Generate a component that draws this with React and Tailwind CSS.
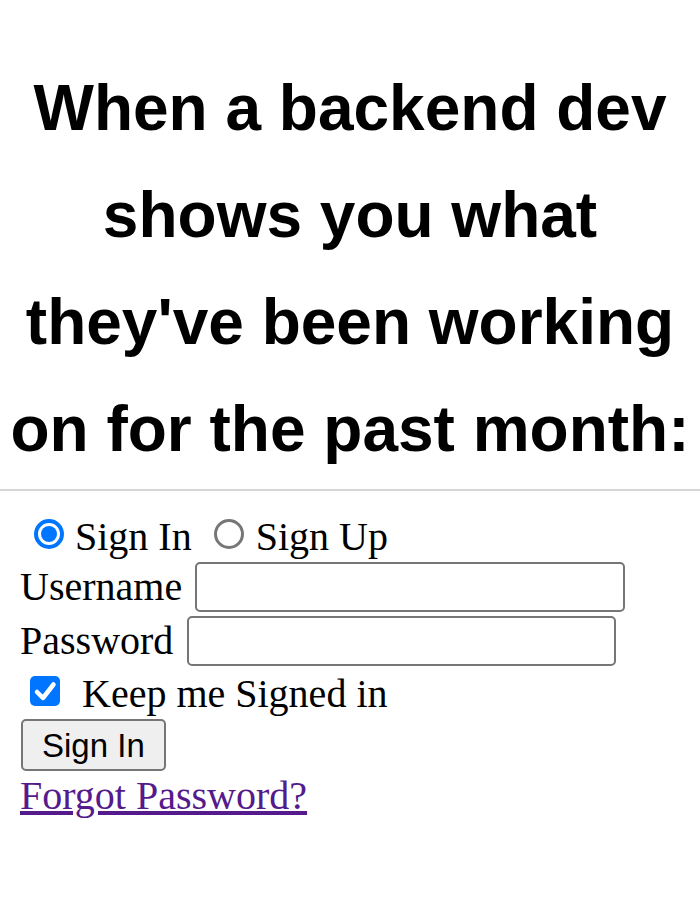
function Radio({ checked, className }) {
  return checked ? (
    <span
      className={`w-[30px] h-[30px] rounded-full border-[4px] border-[#0075ff] bg-white flex items-center justify-center shrink-0 ${className}`}
    >
      <span className="w-[16px] h-[16px] rounded-full bg-[#0075ff]" />
    </span>
  ) : (
    <span
      className={`w-[30px] h-[30px] rounded-full border-[3px] border-[#767676] bg-white shrink-0 ${className}`}
    />
  );
}

export default function App() {
  return (
    <div className="w-[700px] h-[900px] bg-white overflow-hidden">
      <div className="pt-[55px] text-center font-bold text-black text-[64px] leading-[107px] font-['Liberation_Sans',Arial,sans-serif] whitespace-nowrap">
        <div>When a backend dev</div>
        <div>shows you what</div>
        <div>they've been working</div>
        <div>on for the past month:</div>
      </div>
      <div className="mt-[6px] h-[2px] bg-[#d6d6d6]" />
      <div className="px-[20px] font-['Liberation_Serif','Times_New_Roman',serif] text-[40px] leading-[46px] text-black">
        <div className="mt-[23px] h-[46px] flex items-center">
          <Radio checked className="ml-[14px] mr-[11px] mb-[7px]" />
          <span>Sign In</span>
          <Radio className="ml-[22px] mr-[12px] mb-[7px]" />
          <span>Sign Up</span>
        </div>
        <div className="h-[54px] flex items-center">
          <span>Username</span>
          <input
            type="text"
            className="ml-[13px] w-[430px] h-[50px] border-2 border-[#767676] rounded-[5px] bg-white"
          />
        </div>
        <div className="h-[54px] flex items-center">
          <span>Password</span>
          <input
            type="password"
            className="ml-[14px] w-[429px] h-[50px] border-2 border-[#767676] rounded-[5px] bg-white"
          />
        </div>
        <div className="mt-[3px] h-[46px] flex items-center">
          <span className="w-[30px] h-[30px] ml-[10px] mr-[22px] mb-[6px] rounded-[5px] bg-[#0075ff] flex items-center justify-center shrink-0">
            <svg width="30" height="30" viewBox="0 0 30 30" fill="none">
              <path
                d="M7 16 L13 22 L23.5 8.5"
                stroke="white"
                strokeWidth="4.5"
                strokeLinecap="round"
                strokeLinejoin="round"
              />
            </svg>
          </span>
          <span>Keep me Signed in</span>
        </div>
        <div className="mt-[2px]">
          <button className="h-[52px] px-[19px] ml-[1px] border-2 border-[#767676] rounded-[5px] bg-[#efefef] text-[33px] leading-none font-['Liberation_Sans',Arial,sans-serif] text-black">
            Sign In
          </button>
        </div>
        <div className="mt-[2px]">
          <a href="#" className="underline text-[#551a8b]">
            Forgot Password?
          </a>
        </div>
      </div>
    </div>
  );
}
